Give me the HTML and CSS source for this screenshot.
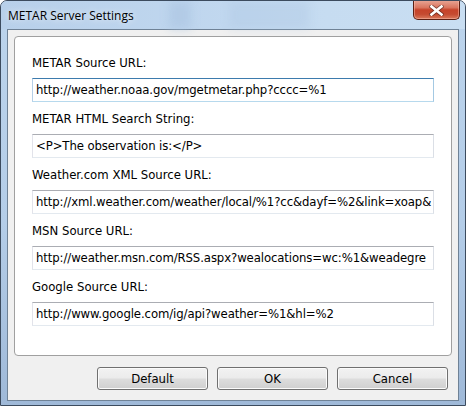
FILE: index.html
```html
<!DOCTYPE html>
<html>
<head>
<meta charset="utf-8">
<title>METAR Server Settings</title>
<link rel="stylesheet" href="styles.css">
</head>
<body>
<div class="window">
  <div class="titlebar">
    <div class="glass-band band-a"></div>
    <div class="glass-band band-b"></div>
    <span class="title">METAR Server Settings</span>
    <button class="close" aria-label="Close">
      <svg width="15" height="11" viewBox="0 0 15 11">
        <path d="M2.5 1.5 L12.5 9.5 M12.5 1.5 L2.5 9.5" stroke="#3a1a14" stroke-width="4.2" stroke-linecap="square" fill="none" opacity="0.55"/>
        <path d="M2.5 1.5 L12.5 9.5 M12.5 1.5 L2.5 9.5" stroke="#ffffff" stroke-width="2.6" stroke-linecap="square" fill="none"/>
      </svg>
    </button>
  </div>
  <div class="client">
    <div class="panel">
      <div class="field-group">
        <label class="field-label">METAR Source URL:</label>
        <div class="textbox focused">http://weather.noaa.gov/mgetmetar.php?cccc=%1</div>
      </div>
      <div class="field-group">
        <label class="field-label">METAR HTML Search String:</label>
        <div class="textbox">&lt;P&gt;The observation is:&lt;/P&gt;</div>
      </div>
      <div class="field-group">
        <label class="field-label">Weather.com XML Source URL:</label>
        <div class="textbox">http://xml.weather.com/weather/local/%1?cc&amp;dayf=%2&amp;link=xoap&amp;</div>
      </div>
      <div class="field-group">
        <label class="field-label">MSN Source URL:</label>
        <div class="textbox">http://weather.msn.com/RSS.aspx?wealocations=wc:%1&amp;weadegre</div>
      </div>
      <div class="field-group">
        <label class="field-label">Google Source URL:</label>
        <div class="textbox">http://www.google.com/ig/api?weather=%1&amp;hl=%2</div>
      </div>
    </div>
    <div class="buttons">
      <button class="btn">Default</button>
      <button class="btn">OK</button>
      <button class="btn">Cancel</button>
    </div>
  </div>
</div>
</body>
</html>
```
FILE: styles.css
```css
html, body {
  margin: 0;
  padding: 0;
  background: #ffffff;
}

.window {
  width: 466px;
  height: 406px;
  box-sizing: border-box;
  border: 1px solid #3c4b5e;
  border-radius: 7px 7px 0 0;
  background: linear-gradient(180deg, #bcd4ec 0%, #b4cde8 55%, #9fb9d8 100%);
  display: flex;
  flex-direction: column;
  overflow: hidden;
}

/* glass title bar */
.titlebar {
  position: relative;
  height: 28px;
  display: flex;
  align-items: flex-start;
  justify-content: space-between;
  padding: 0 5px 0 7px;
  background: linear-gradient(90deg, #b8d0ea 0%, #bfd6ee 40%, #c6dcf1 70%, #c9def2 100%);
}

.glass-band {
  position: absolute;
  top: 0;
  height: 28px;
  filter: blur(4px);
  background: #a9c3e1;
  opacity: 0.55;
}
.band-a { left: 168px; width: 22px; }
.band-b { left: 228px; width: 80px; opacity: 0.3; }

.title {
  position: relative;
  font-family: "Open Sans", "Noto Sans", sans-serif;
  font-size: 12px;
  line-height: 16px;
  margin-top: 7px;
  color: #000000;
  text-shadow: 0 0 6px rgba(255, 255, 255, 0.9);
}

.close {
  position: relative;
  width: 47px;
  height: 20px;
  margin: -1px 0 0 0;
  padding: 0;
  border: 1px solid #5b1f13;
  border-top: none;
  border-radius: 0 0 5px 5px;
  background: linear-gradient(180deg, #e9a898 0%, #d9755f 40%, #c6432a 52%, #c54a30 75%, #d9795c 100%);
  box-shadow: inset 0 0 0 1px rgba(255, 200, 185, 0.45);
  display: flex;
  align-items: center;
  justify-content: center;
}
.close svg { display: block; margin-top: 1px; }

/* dialog client area */
.client {
  flex: 1;
  margin: 0 6px 4px 6px;
  border: 1px solid #6f8296;
  background: #f0f0f0;
  display: flex;
  flex-direction: column;
  padding: 6px 6px 0 6px;
  font-family: Tahoma, "DejaVu Sans Condensed", "DejaVu Sans", sans-serif;
  font-size: 13px;
  color: #000000;
}

.panel {
  height: 320px;
  box-sizing: border-box;
  border: 1px solid #a0a0a0;
  border-radius: 4px;
  background: #ffffff;
  padding: 18px 17px 0 17px;
  display: flex;
  flex-direction: column;
  gap: 9px;
}

.field-group {
  display: flex;
  flex-direction: column;
  gap: 7px;
}

.field-label {
  line-height: 16px;
  height: 16px;
  white-space: nowrap;
}

.textbox {
  height: 24px;
  box-sizing: border-box;
  border: 1px solid;
  border-color: #abadb3 #dbdfe6 #e3e9ef #e2e3ea;
  padding: 0 3px;
  line-height: 22px;
  letter-spacing: -0.1px;
  white-space: nowrap;
  overflow: hidden;
}
.textbox.focused {
  border-color: #3d7bad #a4c9e3 #b7d9ed #b5cfe7;
}

.buttons {
  display: flex;
  justify-content: flex-end;
  gap: 9px;
  margin: 11px 4px 0 0;
}

.btn {
  width: 111px;
  height: 23px;
  padding: 0;
  border: 1px solid #707070;
  border-radius: 3px;
  background: linear-gradient(180deg, #f2f2f2 0%, #ebebeb 48%, #dddddd 52%, #cfcfcf 100%);
  box-shadow: inset 0 0 0 1px #fbfbfb;
  font-family: Tahoma, "DejaVu Sans Condensed", "DejaVu Sans", sans-serif;
  font-size: 13px;
  color: #000000;
}
```
